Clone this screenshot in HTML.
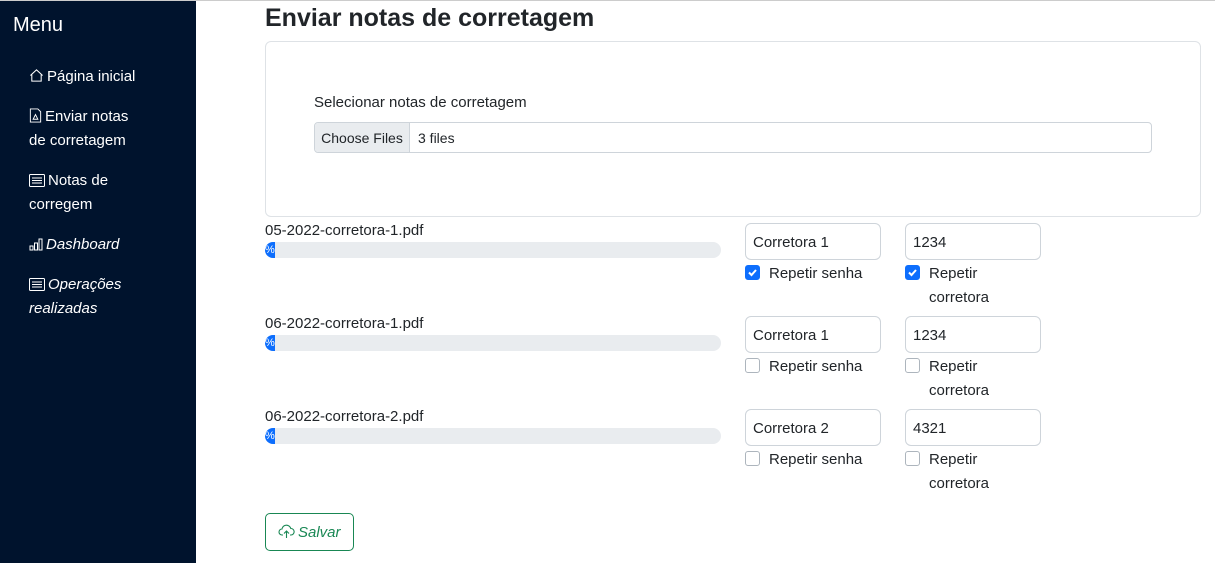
<!DOCTYPE html>
<html><head><meta charset="utf-8"><style>
*{box-sizing:border-box}
body{margin:0;width:1215px;height:563px;overflow:hidden;font-family:"Liberation Sans",sans-serif;color:#212529;background:#fff;position:relative;font-size:15px}
.top{position:absolute;left:0;top:0;width:1215px;height:1px;background:#ccc}
.side{position:absolute;left:0;top:1px;width:196px;height:562px;background:#00132d;color:#fff}
.side h2{position:absolute;left:13px;top:13px;margin:0;font-size:20px;font-weight:normal}
.side .it{position:absolute;left:29px;font-size:15px;line-height:24px;width:112px}
.side svg{vertical-align:-2px;margin-right:3px}
.i{font-style:italic}
h1{position:absolute;left:265px;top:4px;margin:0;font-size:25px;font-weight:600;color:#212529}
.card{position:absolute;left:265px;top:41px;width:936px;height:176px;border:1px solid #dee2e6;border-radius:6px}
.lbl{position:absolute;left:314px;top:94px;font-size:15px}
.file{position:absolute;left:314px;top:122px;width:838px;height:31px;border:1px solid #ced4da;border-radius:4px;font-size:14px;overflow:hidden}
.file span.b{position:absolute;left:0;top:0;height:29px;width:95px;background:#e9ecef;border-right:1px solid #ced4da;line-height:30px;text-align:center}
.file span.t{position:absolute;left:103px;line-height:30px}
.fn{position:absolute;left:265px;font-size:15px}
.bar{position:absolute;left:265px;width:456px;height:16px;background:#e9ecef;border-radius:8px;overflow:hidden}
.bar div{width:10px;height:16px;background:#0d6efd;color:#fff;font-size:11px;line-height:16px}
.inp{position:absolute;width:136px;height:37px;border:1px solid #ced4da;border-radius:6px;padding-left:7px;line-height:37px;font-size:15px}
.cb{position:absolute;width:15px;height:15px;border:1px solid #adb5bd;border-radius:3px;background:#fff}
.cb.on{background:#0d6efd;border-color:#0d6efd}
.ct{position:absolute;font-size:15px;line-height:24px}
.btn{position:absolute;left:265px;top:513px;width:89px;height:38px;border:1px solid #198754;border-radius:5px;color:#198754;font-style:italic;font-size:15px;line-height:38px;padding-left:12px}
</style></head><body>
<div class="top"></div>
<div class="side">
<h2>Menu</h2>
<div class="it" style="top:64px"><svg width="15" height="15" viewBox="0 0 16 16" fill="none" stroke="#fff" stroke-width="1.1"><path d="M1.5 8 8 2l6.5 6M3 7v7h10V7"/></svg>Página inicial</div>
<div class="it" style="top:104px"><svg width="13" height="15" viewBox="0 0 13 16" fill="none" stroke="#fff" stroke-width="1"><path d="M1 1h8l3 3v11H1z"/><path d="M4 12l2.5-5 2.5 5z"/></svg>Enviar notas de corretagem</div>
<div class="it" style="top:168px"><svg width="16" height="13" viewBox="0 0 16 13" fill="none" stroke="#fff" stroke-width="1"><rect x=".5" y=".5" width="15" height="12" rx="1"/><path d="M3 4h10M3 6.5h10M3 9h10"/></svg>Notas de corregem</div>
<div class="it i" style="top:232px"><svg width="14" height="13" viewBox="0 0 14 13" fill="none" stroke="#fff" stroke-width="1"><rect x="1" y="8" width="3" height="4"/><rect x="5.5" y="5" width="3" height="7"/><rect x="10" y="1" width="3" height="11"/></svg>Dashboard</div>
<div class="it i" style="top:272px"><svg width="16" height="13" viewBox="0 0 16 13" fill="none" stroke="#fff" stroke-width="1"><rect x=".5" y=".5" width="15" height="12" rx="1"/><path d="M3 4h10M3 6.5h10M3 9h10"/></svg>Operações realizadas</div>
</div>
<h1>Enviar notas de corretagem</h1>
<div class="card"></div>
<div class="lbl">Selecionar notas de corretagem</div>
<div class="file"><span class="b">Choose Files</span><span class="t">3 files</span></div>

<div class="fn" style="top:222px">05-2022-corretora-1.pdf</div>
<div class="bar" style="top:242px"><div>%</div></div>
<div class="inp" style="left:745px;top:223px">Corretora 1</div>
<div class="inp" style="left:905px;top:223px">1234</div>
<div class="cb on" style="left:745px;top:265px"><svg width="13" height="13" viewBox="0 0 13 13"><path d="M3 6.5l2.5 2.5 4.5-5" stroke="#fff" stroke-width="2" fill="none"/></svg></div>
<div class="ct" style="left:769px;top:262px">Repetir senha</div>
<div class="cb on" style="left:905px;top:265px"><svg width="13" height="13" viewBox="0 0 13 13"><path d="M3 6.5l2.5 2.5 4.5-5" stroke="#fff" stroke-width="2" fill="none"/></svg></div>
<div class="ct" style="left:929px;top:262px">Repetir<br>corretora</div>

<div class="fn" style="top:315px">06-2022-corretora-1.pdf</div>
<div class="bar" style="top:335px"><div>%</div></div>
<div class="inp" style="left:745px;top:316px">Corretora 1</div>
<div class="inp" style="left:905px;top:316px">1234</div>
<div class="cb" style="left:745px;top:358px"></div>
<div class="ct" style="left:769px;top:355px">Repetir senha</div>
<div class="cb" style="left:905px;top:358px"></div>
<div class="ct" style="left:929px;top:355px">Repetir<br>corretora</div>

<div class="fn" style="top:408px">06-2022-corretora-2.pdf</div>
<div class="bar" style="top:428px"><div>%</div></div>
<div class="inp" style="left:745px;top:409px">Corretora 2</div>
<div class="inp" style="left:905px;top:409px">4321</div>
<div class="cb" style="left:745px;top:451px"></div>
<div class="ct" style="left:769px;top:448px">Repetir senha</div>
<div class="cb" style="left:905px;top:451px"></div>
<div class="ct" style="left:929px;top:448px">Repetir<br>corretora</div>

<div class="btn"><svg width="17" height="15" viewBox="0 0 17 15" fill="none" stroke="#198754" stroke-width="1.1" style="vertical-align:-2px;margin-right:3px"><path d="M5 11H4a3 3 0 0 1 0-6 4.5 4.5 0 0 1 8.8-.5A3 3 0 0 1 13 11h-1"/><path d="M8.5 14V7M6 9.5l2.5-2.5 2.5 2.5"/></svg>Salvar</div>
</body></html>
